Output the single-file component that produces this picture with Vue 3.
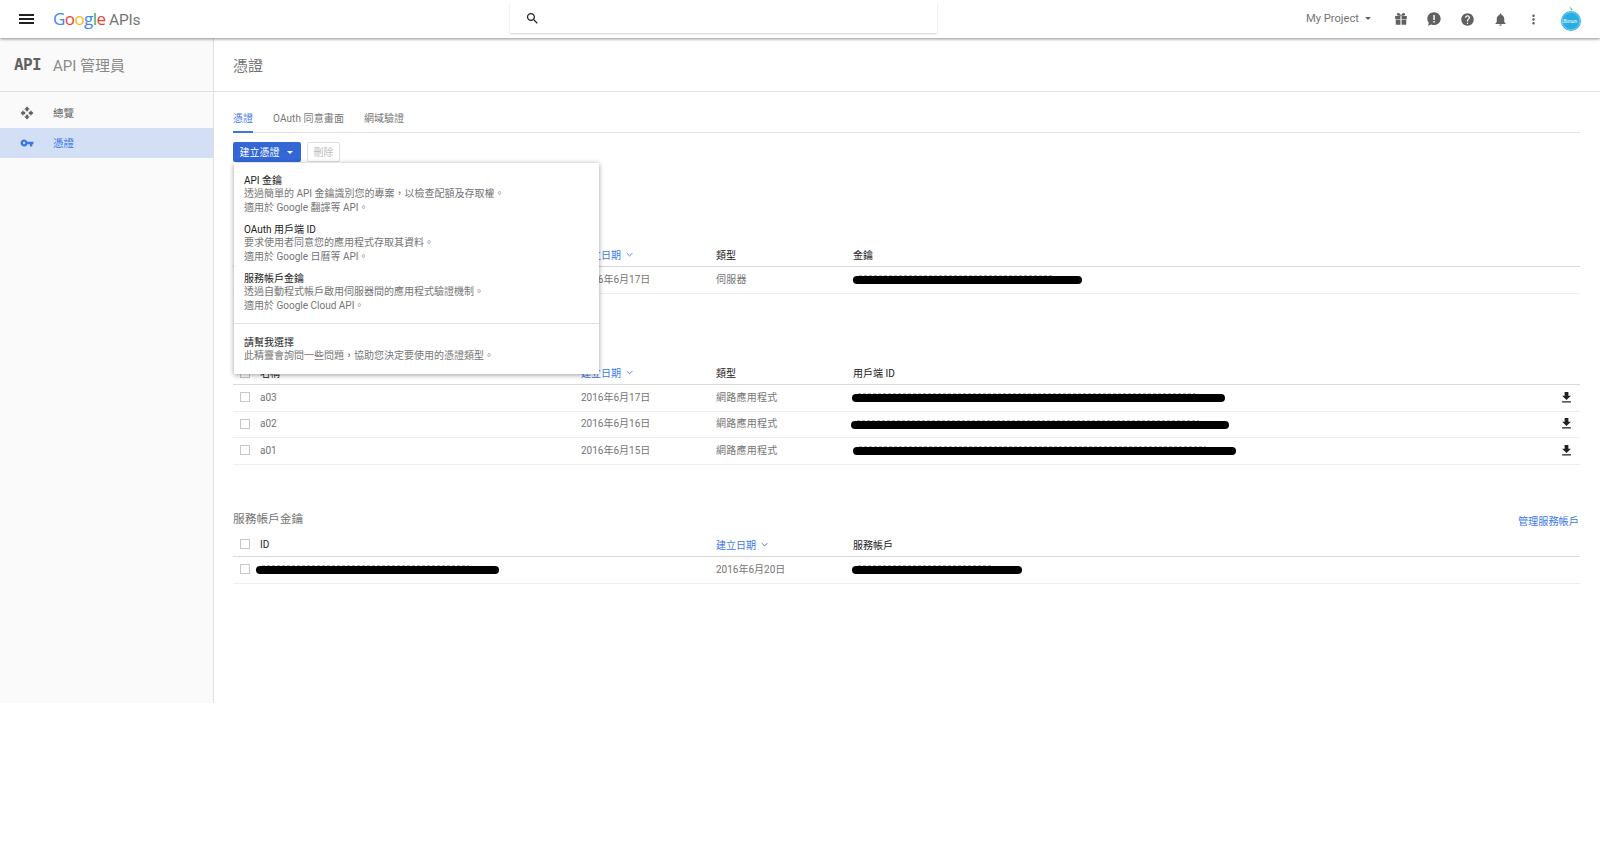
<script setup>
const menu = [
  { t: 'API 金鑰', d: ['透過簡單的 API 金鑰識別您的專案，以檢查配額及存取權。', '適用於 Google 翻譯等 API。'] },
  { t: 'OAuth 用戶端 ID', d: ['要求使用者同意您的應用程式存取其資料。', '適用於 Google 日曆等 API。'] },
  { t: '服務帳戶金鑰', d: ['透過自動程式帳戶啟用伺服器間的應用程式驗證機制。', '適用於 Google Cloud API。'] }
]
const oauth = [
  { n: 'a03', date: '2016年6月17日', offset: -1, w: 373 },
  { n: 'a02', date: '2016年6月16日', offset: -2, w: 378 },
  { n: 'a01', date: '2016年6月15日', offset: 0, w: 383 }
]
const logo = [['G', '#4285f4'], ['o', '#ea4335'], ['o', '#fbbc05'], ['g', '#4285f4'], ['l', '#34a853'], ['e', '#ea4335']]
</script>

<template>
  <div class="page">
    <header class="topbar">
      <div class="top-left">
        <div class="burger"><i></i><i></i><i></i></div>
        <div class="logo"><span v-for="(l, i) in logo" :key="i" :style="{ color: l[1] }">{{ l[0] }}</span><span class="apis"> APIs</span></div>
      </div>
      <div class="search">
        <svg viewBox="0 0 24 24" width="15" height="15"><path fill="#212121" d="M15.5 14h-.79l-.28-.27C15.41 12.59 16 11.11 16 9.5 16 5.91 13.09 3 9.5 3S3 5.91 3 9.5 5.91 16 9.5 16c1.61 0 3.09-.59 4.23-1.57l.27.28v.79l5 4.99L20.49 19l-4.99-5zm-6 0C7.01 14 5 11.99 5 9.5S7.01 5 9.5 5 14 7.01 14 9.5 11.99 14 9.5 14z"/></svg>
      </div>
      <div class="top-right">
        <div class="project">My Project<span class="caret"></span></div>
        <div class="slot nudge"><svg viewBox="0 0 24 24" width="14" height="14"><path fill="#616161" d="M2 7h9v5H2zM13 7h9v5h-9zM3 13h8v9H3zM13 13h8v9h-8zM7.5 1.5c1.8 0 3.4 1.7 4.5 4.5 1.1-2.8 2.7-4.5 4.5-4.5 1.6 0 2.7 1.1 2.7 2.500S18 6.500 16.500 6.500h-9C6 6.500 4.800 5.400 4.800 4S5.900 1.500 7.500 1.500z"/></svg></div>
        <div class="slot nudge"><svg viewBox="0 0 24 24" width="16" height="16"><path fill="#616161" d="M12 2C6.500 2 2 6.300 2 11.500c0 2.300.9 4.400 2.300 6L3 22l5-1.800c1.200.5 2.600.8 4 .8 5.500 0 10-4.300 10-9.500S17.500 2 12 2z"/><path fill="#fff" d="M11 6h2.200v7.500H11zM11 15h2.200v2.200H11z"/></svg></div>
        <div class="slot"><svg viewBox="0 0 24 24" width="15" height="15"><path fill="#616161" d="M12 2C6.480 2 2 6.480 2 12s4.480 10 10 10 10-4.480 10-10S17.520 2 12 2zm1 17h-2v-2h2v2zm2.070-7.750l-.9.920C13.450 12.900 13 13.500 13 15h-2v-.5c0-1.100.45-2.100 1.170-2.830l1.240-1.260c.37-.36.59-.86.59-1.410 0-1.100-.9-2-2-2s-2 .9-2 2H8c0-2.210 1.790-4 4-4s4 1.790 4 4c0 .88-.36 1.680-.93 2.250z"/></svg></div>
        <div class="slot"><svg viewBox="0 0 24 24" width="15" height="15"><path fill="#616161" d="M12 22c1.100 0 2-.9 2-2h-4c0 1.100.89 2 2 2zm6-6v-5c0-3.070-1.640-5.640-4.500-6.320V4c0-.83-.67-1.500-1.500-1.500s-1.500.67-1.500 1.500v.68C7.630 5.360 6 7.920 6 11v5l-2 2v1h16v-1l-2-2z"/></svg></div>
        <div class="slot"><svg viewBox="0 0 24 24" width="15" height="15"><path fill="#616161" d="M12 8c1.100 0 2-.9 2-2s-.9-2-2-2-2 .9-2 2 .9 2 2 2zm0 2c-1.100 0-2 .9-2 2s.9 2 2 2 2-.9 2-2-.9-2-2-2zm0 6c-1.100 0-2 .9-2 2s.9 2 2 2 2-.9 2-2-.9-2-2-2z"/></svg></div>
        <svg class="avatar" viewBox="0 0 20 28" width="20" height="28">
          <path fill="#29aee3" d="M8 1l3.500 3.500-1 1z"/>
          <circle cx="10" cy="16" r="10" fill="#29aee3"/>
          <circle cx="10" cy="16" r="8.800" fill="none" stroke="#b8e6f7" stroke-width=".5"/>
          <text x="2" y="18" class="avatar-text">Bonan</text>
        </svg>
      </div>
    </header>

    <div class="shell">
      <aside class="sidebar">
        <div class="side-head">
          <span class="api-mark">API</span>
          <span class="side-title">API 管理員</span>
        </div>
        <nav class="nav">
          <div class="nav-row">
            <svg viewBox="0 0 24 24" width="14" height="14"><path fill="#616161" d="M10 9h4V6h3l-5-5-5 5h3v3zm-1 1H6V7l-5 5 5 5v-3h3v-4zm14 2l-5-5v3h-3v4h3v3l5-5zm-9 3h-4v3H7l5 5 5-5h-3v-3z"/></svg>
            <span>總覽</span>
          </div>
          <div class="nav-row active">
            <svg viewBox="0 0 24 24" width="14" height="14"><path fill="#3b78e7" d="M12.650 10C11.830 7.670 9.610 6 7 6c-3.310 0-6 2.690-6 6s2.690 6 6 6c2.610 0 4.830-1.670 5.650-4H17v4h4v-4h2v-4H12.650zM7 14c-1.100 0-2-.9-2-2s.9-2 2-2 2 .9 2 2-.9 2-2 2z"/></svg>
            <span>憑證</span>
          </div>
        </nav>
      </aside>

      <main class="main">
        <div class="main-head">憑證</div>
        <div class="content">
          <div class="tabs">
            <span class="tab on">憑證</span>
            <span class="tab wide">OAuth 同意畫面</span>
            <span class="tab">網域驗證</span>
          </div>

          <div class="toolbar">
            <button class="create">建立憑證<span class="caret white"></span></button>
            <button class="del">刪除</button>
            <div class="dropdown">
              <div v-for="m in menu" :key="m.t" class="item">
                <div class="item-t">{{ m.t }}</div>
                <div v-for="d in m.d" :key="d" class="item-d">{{ d }}</div>
              </div>
              <div class="divider"></div>
              <div class="item last">
                <div class="item-t">請幫我選擇</div>
                <div class="item-d">此精靈會詢問一些問題，協助您決定要使用的憑證類型。</div>
              </div>
            </div>
          </div>

          <section class="sec first">
            <div class="sec-title"></div>
            <div class="row head h21 cols4">
              <span class="cb"></span><span></span>
              <span class="sort">建立日期<svg viewBox="0 0 10 6" width="7" height="5"><path d="M1 1l4 4 4-4" fill="none" stroke="#3b78e7" stroke-width="1.300"/></svg></span>
              <span>類型</span><span>金鑰</span>
            </div>
            <div class="row one cols4">
              <span class="cb"></span><span></span><span class="cell">2016年6月17日</span><span class="cell spaced">伺服器</span>
              <span class="redact" style="width: 229px"></span>
            </div>
          </section>

          <section class="sec second">
            <div class="sec-title"></div>
            <div class="row head h22 cols5">
              <span class="cb"></span><span>名稱</span>
              <span class="sort">建立日期<svg viewBox="0 0 10 6" width="7" height="5"><path d="M1 1l4 4 4-4" fill="none" stroke="#3b78e7" stroke-width="1.300"/></svg></span>
              <span>類型</span><span>用戶端 ID</span><span></span>
            </div>
            <div v-for="r in oauth" :key="r.n" class="row cols5">
              <span class="cb"></span><span>{{ r.n }}</span><span class="cell">{{ r.date }}</span><span class="cell spaced">網路應用程式</span>
              <span class="redact" :style="{ width: r.w + 'px', marginLeft: r.offset + 'px' }"></span>
              <svg class="dl" viewBox="0 0 24 24" width="15" height="15"><path fill="#212121" d="M19 9h-4V3H9v6H5l7 7 7-7zM5 18v2h14v-2H5z"/></svg>
            </div>
          </section>

          <section class="sec">
            <div class="sec-title">服務帳戶金鑰<a class="manage">管理服務帳戶</a></div>
            <div class="row head h21 cols3">
              <span class="cb"></span><span>ID</span>
              <span class="sort">建立日期<svg viewBox="0 0 10 6" width="7" height="5"><path d="M1 1l4 4 4-4" fill="none" stroke="#3b78e7" stroke-width="1.300"/></svg></span>
              <span>服務帳戶</span>
            </div>
            <div class="row one cols3">
              <span class="cb"></span>
              <span class="redact" style="width: 243px; margin-left: -4px"></span>
              <span class="cell">2016年6月20日</span>
              <span class="redact" style="width: 170px; margin-left: -1px"></span>
            </div>
          </section>
        </div>
      </main>
    </div>
  </div>
</template>

<style>
html, body { margin: 0; background: #fff; }
</style>

<style scoped>
.page { width: 1600px; height: 842px; overflow: hidden; background: #fff; font-family: Roboto, "Noto Sans CJK TC", sans-serif; font-size: 10px; color: #757575; }
.topbar { height: 38px; display: flex; background: #fff; box-shadow: 0 1px 3px rgba(0,0,0,.45); position: relative; z-index: 3; }
.top-left { width: 510px; display: flex; align-items: center; padding-left: 19px; box-sizing: border-box; }
.burger { width: 15px; display: flex; flex-direction: column; gap: 2px; }
.burger i { display: block; height: 2px; background: #212121; }
.logo { margin-left: 19px; padding-bottom: 2px; font-family: "Open Sans", sans-serif; font-size: 17px; letter-spacing: -.6px; white-space: pre; }
.logo .apis { color: #757575; font-family: Roboto, sans-serif; font-size: 15.500px; letter-spacing: -.2px; }
.search { width: 427px; height: 30px; margin-top: 3px; display: flex; align-items: center; padding-left: 15px; box-sizing: border-box; background: #fff; box-shadow: 0 1px 2px rgba(0,0,0,.18); }
.top-right { flex: 1; display: flex; align-items: center; justify-content: flex-end; padding-right: 19px; }
.project { font-size: 11.200px; color: #757575; display: flex; align-items: center; margin-right: 14px; padding-bottom: 2px; }
.caret { width: 0; height: 0; border: 3.500px solid transparent; border-top: 3.500px solid #616161; border-bottom: 0; margin-left: 6px; }
.caret.white { border-top-color: #fff; margin-left: 7px; margin-top: 2px; }
.slot { width: 33px; display: flex; justify-content: center; }
.slot.nudge svg { margin-right: 2px; }
.avatar { margin-left: 11px; margin-top: 0; display: block; }
.avatar-text { font-family: "Liberation Serif", serif; font-style: italic; font-size: 5.500px; fill: #fff; }

.shell { display: flex; height: 665px; }
.sidebar { width: 214px; box-sizing: border-box; background: #fafafa; border-right: 1px solid #e0e0e0; }
.side-head { height: 54px; box-sizing: border-box; display: flex; align-items: center; border-bottom: 1px solid #e0e0e0; padding-left: 14px; }
.api-mark { width: 39px; font-family: "DejaVu Sans Mono", monospace; font-weight: 700; font-size: 16px; letter-spacing: -.6px; color: #616161; }
.side-title { font-size: 15px; color: #8a8a8a; }
.nav { padding-top: 6px; }
.nav-row { height: 30px; display: flex; align-items: center; padding-left: 20px; font-size: 10.500px; color: #616161; }
.nav-row span { margin-left: 19px; padding-bottom: 2px; }
.nav-row.active { background: #d2dff5; color: #3b78e7; }

.main { flex: 1; min-width: 0; }
.main-head { height: 54px; box-sizing: border-box; display: flex; align-items: center; border-bottom: 1px solid #e0e0e0; padding-left: 19px; padding-bottom: 1px; font-size: 15px; color: #757575; }
.content { padding: 0 20px 0 19px; }
.tabs { display: flex; gap: 20px; height: 41px; box-sizing: border-box; border-bottom: 1px solid #e0e0e0; padding-top: 19px; }
.tab { color: #757575; height: 22px; box-sizing: border-box; line-height: 16px; }
.tab.wide { letter-spacing: .1px; }
.tab.on { color: #3b78e7; border-bottom: 2px solid #3b78e7; }
.toolbar { position: relative; display: flex; gap: 6px; padding-top: 9px; height: 20px; }
.create { width: 68px; height: 20px; padding: 0 2px 2px 0; border: 0; border-radius: 2px; background: #3367d6; color: #fff; font: inherit; display: flex; align-items: center; justify-content: center; }
.del { width: 33px; height: 20px; padding: 0 0 2px; border: 1px solid #e0e0e0; border-radius: 2px; background: #fff; color: #bdbdbd; font: inherit; }
.dropdown { position: absolute; left: 1px; top: 30px; width: 365px; height: 211px; box-sizing: border-box; padding: 11px 0; background: #fff; box-shadow: 0 1px 5px rgba(0,0,0,.4); z-index: 2; }
.item { padding: 0 10px 7px; }
.item.last { padding-bottom: 0; }
.item-t { height: 14px; line-height: 14px; color: #212121; }
.item-d { height: 14px; line-height: 12px; color: #757575; }
.divider { height: 1px; background: #e0e0e0; margin: 2px 0 11.500px; }

.sec { margin-top: 44.200px; }
.sec.first { margin-top: 57px; }
.sec.second { margin-top: 42.300px; }
.sec-title { height: 21px; margin-bottom: 6px; padding-bottom: 4px; box-sizing: border-box; display: flex; align-items: center; justify-content: space-between; font-size: 11.700px; color: #757575; }
.manage { font-size: 10.200px; color: #3b78e7; padding-top: 6px; padding-right: 1px; }
.row { display: grid; align-items: center; height: 26.600px; padding-bottom: 2px; box-sizing: border-box; border-bottom: 1px solid #eee; color: #757575; }
.row.one { height: 27px; }
.row.head { color: #212121; border-bottom-color: #d9d9d9; padding-bottom: 4px; }
.row.h21 { height: 21px; }
.row.h22 { height: 22px; padding-bottom: 2px; }
.cols3 { grid-template-columns: 27px 456px 137px 1fr; }
.cols4 { grid-template-columns: 27px 321px 135px 137px 1fr; }
.cols5 { grid-template-columns: 27px 321px 135px 137px 1fr 30px; }
.cb { width: 10px; height: 10px; box-sizing: border-box; border: 1px solid #c8c8c8; margin-left: 7px; background: #fff; }
.sort { color: #3b78e7; display: flex; align-items: center; gap: 5px; }
.cell { padding-bottom: 2px; }
.spaced { letter-spacing: .25px; }
.redact { display: block; height: 8px; margin-top: 2px; border-radius: 4px; background: #000; position: relative; }
.redact::before { content: ""; position: absolute; left: 6px; right: 30px; top: -1px; height: 1px; background: repeating-linear-gradient(90deg, #b5b5b5 0 3px, transparent 3px 5px); }
.dl { justify-self: center; margin-left: 2px; }
</style>
